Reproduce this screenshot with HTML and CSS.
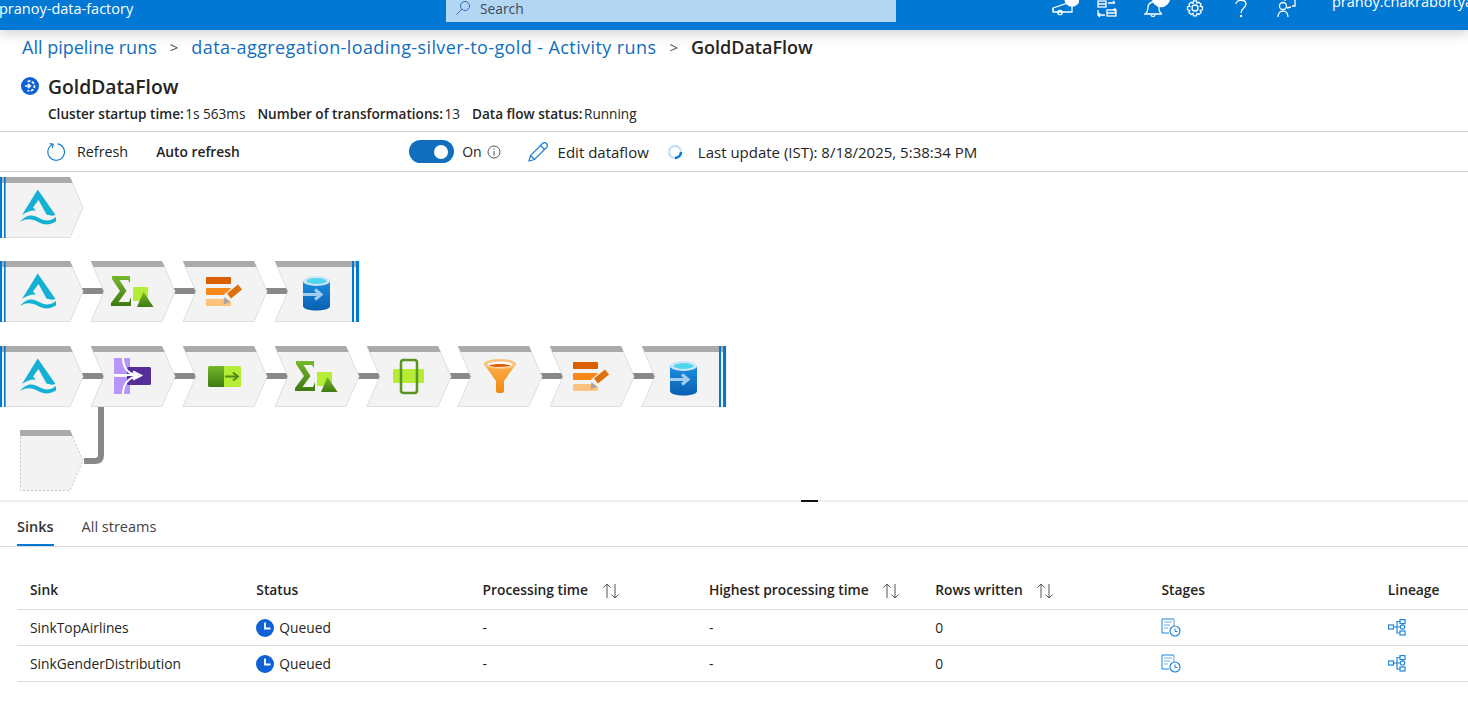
FILE: index.html
```html
<!DOCTYPE html>
<html lang="en">
<head>
<meta charset="UTF-8">
<title>GoldDataFlow</title>
<link rel="stylesheet" href="styles.css">
</head>
<body>

<header class="topbar">
    <div class="brand">pranoy-data-factory</div>
    <div class="search">
        <svg class="search-icon" width="16" height="16" viewBox="0 0 16 16"><circle cx="10" cy="6" r="4.5"/><path d="M6.8 9.2 1.5 14.5"/></svg>
        <span>Search</span>
    </div>
    <div class="top-icons">
        <svg class="icon-promo" width="27" height="30" viewBox="0 0 27 30"><path d="M1 8 16 3h4v9H1z"/><path d="M1 8v3"/><circle cx="8" cy="12.500" r="2.200"/><circle cx="20" cy="-1" r="7" class="white"/></svg>
        <svg class="icon-switch" width="20" height="30" viewBox="0 0 20 30"><rect x="1" y="1" width="8" height="6"/><path d="M1 4h8M11 3h7M18 3l-2-2M18 8v3l-2-2"/><rect x="10" y="10" width="9" height="6"/><path d="M10 13h9M1 10v5h7M1 15l2-2M1 15l2 2"/></svg>
        <svg class="icon-bell" width="26" height="30" viewBox="0 0 26 30"><path d="M1 14c3-2 3-4 3-7 0-2 2-5 5-5 4 0 6 3 6 6 0 3 1 5 3 6z"/><path d="M7 15c0 2 4 2 4 0"/><circle cx="17" cy="-2" r="8.500" class="white"/></svg>
        <svg class="icon-gear" width="20" height="20" viewBox="0 0 20 20"><circle cx="10" cy="8" r="3"/><path d="M8.5 .8h3l.5 2.4 2-1 2.200 2.100-1.100 2 2.400.5v3l-2.400.6 1.100 2-2.200 2.100-2-1.100-.5 2.400h-3l-.5-2.400-2 1.100-2.200-2.100 1.100-2-2.400-.6v-3l2.400-.5-1.100-2L6 2.200l2 1z"/></svg>
        <svg class="icon-help" width="14" height="30" viewBox="0 0 14 30"><path d="M2 4c0-5 10-5 10 0 0 4-5 4-5 9"/><circle cx="7" cy="16" r=".6"/></svg>
        <svg class="icon-feedback" width="20" height="30" viewBox="0 0 20 30"><path d="M8 0v1M18 0v6h-3M10 8l4-1"/><circle cx="6" cy="6" r="3.500"/><path d="M1 17c0-8 10-8 10 0"/></svg>
    </div>
    <div class="user">pranoy.chakrabortya</div>
</header>

<nav class="crumbs">
    <a>All pipeline runs</a>
    <span class="sep">&gt;</span>
    <a class="crumb-long">data-aggregation-loading-silver-to-gold - Activity runs</a>
    <span class="sep">&gt;</span>
    <b>GoldDataFlow</b>
</nav>

<div class="title-row">
    <svg width="18" height="18" viewBox="0 0 18 18"><circle cx="9" cy="9" r="9" fill="#0f62d6"/><path d="M6.500 4.500A5 5 0 0 1 13.500 9a5 5 0 0 1-7 4.500" fill="none" stroke="#fff" stroke-width="1.700" stroke-dasharray="3 1.400"/><path d="M4 9h5M7 6.800 9.300 9 7 11.200" fill="none" stroke="#fff" stroke-width="1.600"/></svg>
    <h1>GoldDataFlow</h1>
</div>

<div class="meta-row">
    <span><b>Cluster startup time:</b> 1s 563ms</span>
    <span><b>Number of transformations:</b> 13</span>
    <span><b>Data flow status:</b> Running</span>
</div>

<div class="toolbar">
    <svg class="tb-refresh" width="20" height="20" viewBox="0 0 20 20"><path d="M7 2.300A8.300 8.300 0 1 0 11.500 1.800M3.500 1.500 7.200 2.300 6.400 6" fill="none" stroke="#1a7fd0" stroke-width="1.200"/></svg>
    <span class="tb-label tb-reload">Refresh</span>
    <b class="tb-auto">Auto refresh</b>
    <span class="switch"><span class="knob"></span></span>
    <span class="tb-on">On</span>
    <svg class="tb-info" width="14" height="14" viewBox="0 0 14 14"><circle cx="7" cy="7" r="6" fill="none" stroke="#444" stroke-width=".9"/><path d="M7 6v4.500M7 3.500v1.200" stroke="#444"/></svg>
    <svg class="tb-pencil" width="20" height="20" viewBox="0 0 20 20"><path d="M1 19l1.500-5.500L14.500 1.500a2.500 2.500 0 0 1 4 4L6.500 17.500zM2.500 13.500l4 4M12.500 3.500l4 4" fill="none" stroke="#1a7fd0" stroke-width="1.200"/></svg>
    <span class="tb-label tb-edit">Edit dataflow</span>
    <svg class="tb-spin" width="16" height="16" viewBox="0 0 16 16"><circle cx="8" cy="8" r="6" fill="none" stroke="#c7e0f4" stroke-width="2.400"/><path d="M14 8A6 6 0 0 1 8 14" fill="none" stroke="#0078d4" stroke-width="2.400"/></svg>
    <span class="tb-label tb-update">Last update (IST): 8/18/2025, 5:38:34 PM</span>
</div>

<svg class="graph" width="1468" height="328" viewBox="0 172 1468 328">
    <defs>
        <g id="n-first">
            <path d="M-1 .5H70L83 30.500 70 60.500H-1z" fill="#f3f3f3" stroke="#e1dfdd"/>
            <path d="M0 0H70L72.600 6H0z" fill="#aaa"/>
            <path d="M0 0h2v61H0zM4 0h1.600v61H4z" fill="#0078d4"/>
        </g>
        <g id="n-mid">
            <path d="M0 .5H71L84 30.500 71 60.500H0L13 30.500z" fill="#f3f3f3" stroke="#e1dfdd"/>
            <path d="M0 0H71L73.600 6H2.600z" fill="#aaa"/>
        </g>
        <g id="n-last">
            <path d="M0 .5H84V60.500H0L13 30.500z" fill="#f3f3f3" stroke="#e1dfdd"/>
            <path d="M0 0H84V6H2.600z" fill="#aaa"/>
            <path d="M77 0h2v61h-2zM81 0h3v61h-3z" fill="#0078d4"/>
        </g>
        <linearGradient id="g-green" x1="0" y1="0" x2="0" y2="1"><stop offset="0" stop-color="#76b82a"/><stop offset="1" stop-color="#3f7a12"/></linearGradient>
        <linearGradient id="g-db" x1="0" y1="0" x2="0" y2="1"><stop offset="0" stop-color="#1b8fe0"/><stop offset="1" stop-color="#0a5eb0"/></linearGradient>
        <linearGradient id="g-funnel" x1="0" y1="0" x2="0" y2="1"><stop offset="0" stop-color="#fcae4a"/><stop offset="1" stop-color="#f08a12"/></linearGradient>
        <g id="i-source" fill="#14b1d4">
            <path d="M37.700 12.500 22 38C27 34.500 31 33 36 33.500L33 30.500 38.500 23 46.500 37.500C50 39 52.500 39 55.500 38z"/>
            <path d="M20 45C27 37 33 37.500 39 41 45 44.500 50 44.500 56 40V44.500C49 48.500 44 48 38 45 32 42 27 41 20 45z"/>
        </g>
        <g id="i-agg">
            <path d="M13 15H31V22L29 19H20.500L27.500 30 19.500 41H30L32 36V45H12V42L21 30 13 18z" fill="url(#g-green)"/>
            <rect x="34" y="26" width="15" height="14" rx="1" fill="#b4ec36"/>
            <path d="M44.500 31 54.500 46H38z" fill="url(#g-green)"/>
        </g>
        <g id="i-alter">
            <rect x="23" y="16" width="25" height="7" rx="1" fill="#d95f00"/>
            <rect x="23" y="27" width="25" height="7" rx="1" fill="#f7891b"/>
            <rect x="23" y="38" width="25" height="7" rx="1" fill="#fdc27b"/>
            <path d="M44 37 57 26" stroke="#f3f3f3" stroke-width="9"/>
            <path d="M46 35 57 26" stroke="#e0700f" stroke-width="6.500"/>
            <path d="M40.500 43.500 41.500 36 47 41z" fill="#a8a6a4"/>
        </g>
        <g id="i-sink">
            <path d="M28 20V45C28 51 55 51 55 45V20z" fill="url(#g-db)"/>
            <ellipse cx="41.500" cy="20" rx="13.500" ry="5" fill="#cfe4f4"/>
            <ellipse cx="41.500" cy="20" rx="10" ry="3" fill="#50d7f0"/>
            <path d="M28 33.500H44M40 28.500 46 33.500 40 38.500" fill="none" stroke="#a5cdf0" stroke-width="3"/>
        </g>
        <g id="i-join">
            <path d="M23 12H39V28H23zM23 31H39V48H23z" fill="#b796f9"/>
            <rect x="36" y="21" width="24" height="18" rx="1.500" fill="#552f99"/>
            <path d="M32 12C32 21 37 29 47 29H23M32 48C32 39 37 31 47 30M42 25.500 50 29.500 42 33.500" fill="none" stroke="#fff" stroke-width="2"/>
        </g>
        <g id="i-derive">
            <rect x="25" y="20" width="17" height="21" rx="1.500" fill="url(#g-green)"/>
            <rect x="41" y="20" width="17" height="21" rx="1.500" fill="#b4ec36"/>
            <path d="M42 30.500H54M50 26.500 55 30.500 50 34.500" fill="none" stroke="#4f8a1a" stroke-width="2"/>
        </g>
        <g id="i-pivot">
            <rect x="26" y="23" width="31" height="14" rx="1.500" fill="#b4ec36"/>
            <rect x="34" y="14" width="16" height="33" rx="2.500" fill="none" stroke="#5a9421" stroke-width="2.500"/>
        </g>
        <g id="i-filter">
            <path d="M26 18 38 35V45C38 48 46 48 46 45V35L58 18z" fill="url(#g-funnel)"/>
            <ellipse cx="42" cy="18" rx="16" ry="5" fill="#fdc27b"/>
            <ellipse cx="42" cy="18.500" rx="12.500" ry="3" fill="#fff"/>
            <path d="M31 19.500C36 21.500 47 21.500 53 19.500 47 17.500 36 17.500 31 19.500z" fill="#d95f00"/>
        </g>
    </defs>

    <g fill="none" stroke="#8a8886" stroke-width="6">
        <path d="M80 291h28M172 291h28M264 291h28"/>
        <path d="M80 376h28M172 376h28M264 376h28M356 376h28M448 376h28M540 376h28M632 376h28"/>
        <path d="M101 405V455Q101 461 95 461H84"/>
    </g>

    <use href="#n-first" y="177"/><use href="#i-source" y="177"/>

    <g transform="translate(0 261)">
        <use href="#n-first"/><use href="#i-source"/>
        <use href="#n-mid" x="91"/><use href="#i-agg" x="99"/>
        <use href="#n-mid" x="183"/><use href="#i-alter" x="183"/>
        <use href="#n-last" x="275"/><use href="#i-sink" x="275"/>
    </g>

    <g transform="translate(0 346)">
        <use href="#n-first"/><use href="#i-source"/>
        <use href="#n-mid" x="91"/><use href="#i-join" x="91"/>
        <use href="#n-mid" x="183"/><use href="#i-derive" x="183"/>
        <use href="#n-mid" x="275"/><use href="#i-agg" x="283"/>
        <use href="#n-mid" x="367"/><use href="#i-pivot" x="367"/>
        <use href="#n-mid" x="458"/><use href="#i-filter" x="458"/>
        <use href="#n-mid" x="550"/><use href="#i-alter" x="550"/>
        <use href="#n-last" x="642"/><use href="#i-sink" x="642"/>
    </g>

    <g transform="translate(20 430)">
        <path d="M.5 .5H50L63 30.500 50 60.500H.5z" fill="#f3f3f3" stroke="#c8c6c4" stroke-dasharray="2 2"/>
        <path d="M0 0H50L52.600 6H0z" fill="#aaa"/>
    </g>
</svg>

<div class="splitter"><span class="grip"></span></div>

<div class="tabs">
    <span class="tab active">Sinks</span>
    <span class="tab">All streams</span>
</div>

<table class="sinks">
    <thead>
        <tr>
            <th>Sink</th>
            <th>Status</th>
            <th>Processing time <svg class="sort" width="18" height="16" viewBox="0 0 18 16"><path d="M5 15V1M1.500 4.500 5 1l3.500 3.500M13 1v14M9.500 11.500 13 15l3.500-3.500"/></svg></th>
            <th>Highest processing time <svg class="sort" width="18" height="16" viewBox="0 0 18 16"><path d="M5 15V1M1.500 4.500 5 1l3.500 3.500M13 1v14M9.500 11.500 13 15l3.500-3.500"/></svg></th>
            <th>Rows written <svg class="sort" width="18" height="16" viewBox="0 0 18 16"><path d="M5 15V1M1.500 4.500 5 1l3.500 3.500M13 1v14M9.500 11.500 13 15l3.500-3.500"/></svg></th>
            <th>Stages</th>
            <th>Lineage</th>
        </tr>
    </thead>
    <tbody>
        <tr>
            <td>SinkTopAirlines</td>
            <td><span class="status"><svg width="18" height="18" viewBox="0 0 18 18"><circle cx="9" cy="9" r="9" fill="#0f62d6"/><path d="M9 3.500V9.500H14.500" fill="none" stroke="#fff" stroke-width="1.800"/></svg>Queued</span></td>
            <td>-</td>
            <td>-</td>
            <td>0</td>
            <td><svg class="cell-icon" width="20" height="19" viewBox="0 0 20 19"><path d="M13 1H1V15H8" fill="none" stroke="#1f86d8"/><path d="M13 1V8M3 4H11M3 7H9M3 10H7" fill="none" stroke="#6db0e8" stroke-width="1.200"/><circle cx="14" cy="13" r="5" fill="#fff" stroke="#1f86d8" stroke-width="1.200"/><path d="M14 10.500V13.500H16.500" fill="none" stroke="#1f86d8"/></svg></td>
            <td><svg class="cell-icon" width="18" height="17" viewBox="0 0 18 17"><g fill="none" stroke="#1f86d8" stroke-width="1.200"><rect x=".5" y="6" width="5" height="4"/><rect x="12" y=".6" width="5" height="4"/><circle cx="14.500" cy="8" r="2.200"/><rect x="12" y="12" width="5" height="4"/><path d="M5.500 8H12M9 8V2.500H12M9 8V14H12"/></g></svg></td>
        </tr>
        <tr>
            <td>SinkGenderDistribution</td>
            <td><span class="status"><svg width="18" height="18" viewBox="0 0 18 18"><circle cx="9" cy="9" r="9" fill="#0f62d6"/><path d="M9 3.500V9.500H14.500" fill="none" stroke="#fff" stroke-width="1.800"/></svg>Queued</span></td>
            <td>-</td>
            <td>-</td>
            <td>0</td>
            <td><svg class="cell-icon" width="20" height="19" viewBox="0 0 20 19"><path d="M13 1H1V15H8" fill="none" stroke="#1f86d8"/><path d="M13 1V8M3 4H11M3 7H9M3 10H7" fill="none" stroke="#6db0e8" stroke-width="1.200"/><circle cx="14" cy="13" r="5" fill="#fff" stroke="#1f86d8" stroke-width="1.200"/><path d="M14 10.500V13.500H16.500" fill="none" stroke="#1f86d8"/></svg></td>
            <td><svg class="cell-icon" width="18" height="17" viewBox="0 0 18 17"><g fill="none" stroke="#1f86d8" stroke-width="1.200"><rect x=".5" y="6" width="5" height="4"/><rect x="12" y=".6" width="5" height="4"/><circle cx="14.500" cy="8" r="2.200"/><rect x="12" y="12" width="5" height="4"/><path d="M5.500 8H12M9 8V2.500H12M9 8V14H12"/></g></svg></td>
        </tr>
    </tbody>
</table>

</body>
</html>
```

FILE: styles.css
```css
html, body {
    margin: 0;
    padding: 0;
    height: 712px;
    overflow: hidden;
    background: #fff;
}

body {
    font-family: "Open Sans", "Noto Sans", sans-serif;
    font-size: 13.6px;
    color: #252423;
}

b {
    font-weight: 600;
}

.topbar {
    display: flex;
    align-items: flex-start;
    height: 30px;
    background: #0078d4;
    color: #fff;
    overflow: hidden;
    box-shadow: 0 3px 14px rgba(0, 0, 0, 0.2);
}

.brand {
    width: 447px;
    margin-left: -1px;
    flex-shrink: 0;
    line-height: 17px;
    font-size: 14.5px;
}

.search {
    display: flex;
    align-items: flex-start;
    width: 450px;
    height: 22px;
    box-sizing: border-box;
    padding-left: 9px;
    background: #b3d6f2;
    color: #3a4a5a;
    flex-shrink: 0;
    font-size: 13.8px;
    line-height: 17px;
}

.search span {
    margin-left: 9px;
}

.search-icon {
    fill: none;
    stroke: #2f6fb5;
    stroke-width: 1;
}

.top-icons {
    display: flex;
    margin-left: 156px;
    width: 280px;
    flex-shrink: 0;
}

.top-icons svg {
    fill: none;
    stroke: #fff;
    stroke-width: 1.3;
    flex-shrink: 0;
}

.top-icons .white {
    fill: #fff;
}

.icon-switch {
    margin-left: 18px;
}

.icon-bell {
    margin-left: 27px;
}

.icon-gear {
    margin-left: 15px;
}

.icon-help {
    margin-left: 29px;
}

.icon-feedback {
    margin-left: 29px;
}

.user {
    margin-top: -7px;
    line-height: 17px;
    font-size: 14.5px;
    white-space: nowrap;
    flex-shrink: 0;
}

.crumbs {
    display: flex;
    align-items: center;
    height: 34px;
    padding-left: 22px;
    font-size: 18px;
    white-space: nowrap;
}

.crumbs a {
    color: #106ebe;
}

.crumbs .crumb-long {
    letter-spacing: 0.4px;
}

.crumbs b {
    color: #252423;
}

.crumbs .sep {
    margin: 0 13px;
    font-size: 15px;
    color: #555;
}

.title-row {
    display: flex;
    align-items: center;
    height: 28px;
    margin-top: 8px;
    padding-left: 21px;
}

.title-row h1 {
    margin: 0 0 0 9px;
    font-size: 19.3px;
    font-weight: 600;
}

.meta-row {
    display: flex;
    gap: 12px;
    height: 17px;
    margin-top: 5px;
    padding-left: 48px;
    line-height: 17px;
    white-space: nowrap;
}

.meta-row b {
    margin-right: -2px;
}

.toolbar {
    display: flex;
    align-items: center;
    height: 39px;
    margin-top: 9px;
    border-top: 1px solid #d2d0ce;
    border-bottom: 1px solid #d2d0ce;
    padding-left: 46px;
    white-space: nowrap;
    font-size: 15px;
}

.tb-label {
    margin-left: 11px;
}

.tb-reload {
    font-size: 14.3px;
}

.tb-auto {
    width: 253px;
    margin-left: 28px;
    font-size: 13.8px;
}

.switch {
    display: flex;
    align-items: center;
    justify-content: flex-end;
    width: 45px;
    height: 23px;
    box-sizing: border-box;
    padding-right: 6px;
    border-radius: 12px;
    background: #106ebe;
}

.knob {
    width: 14px;
    height: 14px;
    border-radius: 50%;
    background: #fff;
}

.tb-on {
    margin-left: 8px;
    font-size: 14px;
}

.tb-info {
    margin-left: 5px;
}

.tb-pencil {
    margin-left: 27px;
}

.tb-edit {
    margin-left: 10px;
}

.tb-spin {
    margin-left: 18px;
}

.tb-update {
    margin-left: 15px;
}

.graph {
    display: block;
}

.splitter {
    display: flex;
    justify-content: center;
    height: 2px;
    background: #eee;
}

.grip {
    width: 17px;
    height: 2px;
    margin-left: 151px;
    background: #111;
}

.tabs {
    display: flex;
    gap: 28px;
    height: 44px;
    padding-left: 17px;
    border-bottom: 1px solid #d9d9d9;
}

.tab {
    height: 44px;
    box-sizing: border-box;
    padding-top: 15px;
    color: #444;
    font-size: 14.5px;
}

.tab.active {
    font-weight: 600;
    color: #333;
    border-bottom: 2px solid #0078d4;
}

.sinks {
    width: 1451px;
    margin: 26px 0 0 17px;
    border-collapse: collapse;
    table-layout: fixed;
    font-size: 13.8px;
}

.sinks th, .sinks td {
    box-sizing: border-box;
    width: 226.3px;
    padding: 0 0 0 13px;
    text-align: left;
    white-space: nowrap;
    border-bottom: 1px solid #dcdcdc;
}

.sinks th:last-child {
    width: 93.2px;
}

.sinks th {
    height: 36px;
    padding-bottom: 2px;
    font-weight: 600;
}

.sinks td {
    height: 36px;
    padding-top: 1px;
}

.sort {
    margin-left: 10px;
    vertical-align: middle;
    fill: none;
    stroke: #555;
    stroke-width: 1;
}

.status {
    display: flex;
    align-items: center;
    gap: 5px;
}

.cell-icon {
    display: block;
}
```
